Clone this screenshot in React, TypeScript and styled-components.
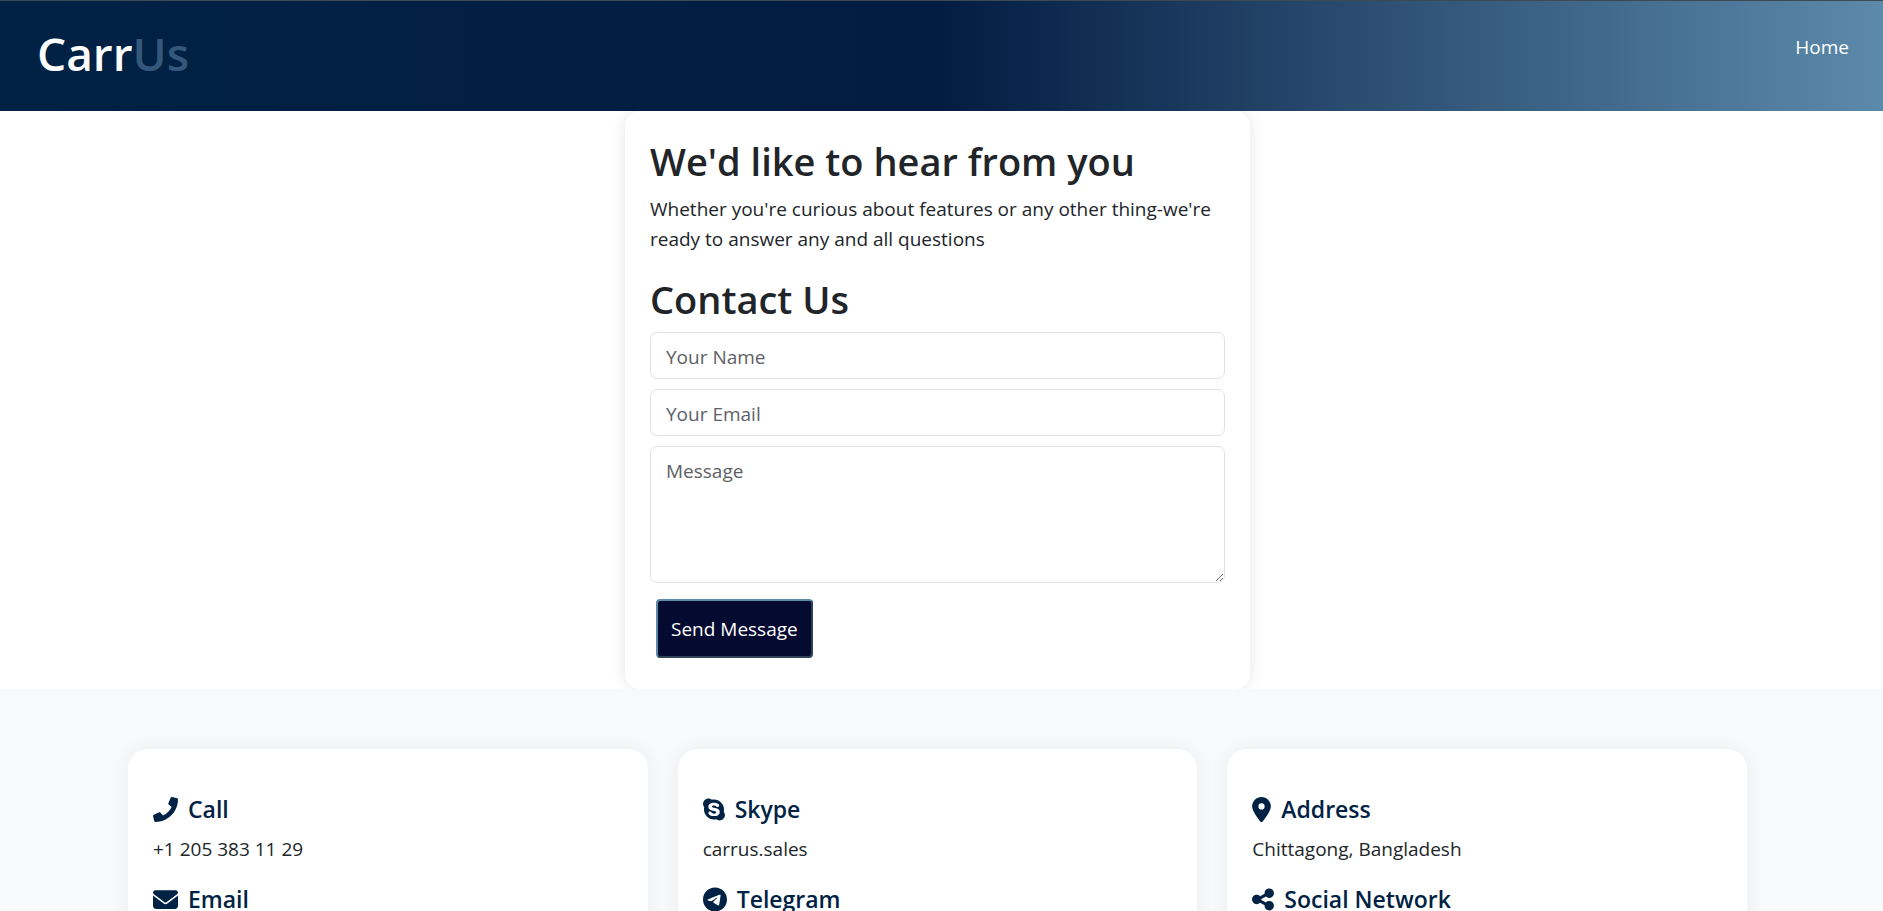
import React from "react";
import styled, { createGlobalStyle } from "styled-components";
import { FaEnvelope, FaSkype, FaTelegram, FaLocationDot, FaShareNodes } from "react-icons/fa6";
import { FaPhone } from "react-icons/fa";

const GlobalStyle = createGlobalStyle`
  *, *::before, *::after { box-sizing: border-box; }
  body {
    margin: 0;
    background: #fff;
    color: #212529;
    font-family: "Segoe UI", "Open Sans", "Noto Sans", sans-serif;
    font-size: 19px;
    line-height: 30px;
  }
  h1, h2, h3, p { margin: 0; }
`;

const Header = styled.header`
  display: flex;
  justify-content: space-between;
  align-items: flex-start;
  padding: 16px 34px 22px 37px;
  border-top: 1px solid #3d4a4f;
  background: linear-gradient(to right, #002244 0%, #031c42 50%, #5c8aaa 100%);
`;

const Brand = styled.a`
  color: #fff;
  font-size: 46px;
  line-height: 72px;
  font-weight: 600;
  text-decoration: none;
`;

const BrandAccent = styled.span`
  color: #34587c;
`;

const NavLink = styled.a`
  display: block;
  padding: 15px 0;
  color: #fff;
  text-decoration: none;
`;

const ContactArea = styled.div`
  overflow: hidden;
  padding-right: 8px;
`;

const ContactCard = styled.section`
  width: 625px;
  max-width: 100%;
  margin: 0 auto;
  padding: 25px;
  border-radius: 15px;
  background: #fff;
  box-shadow: 0 0 15px rgba(0, 0, 0, 0.1);
`;

const Title = styled.h1`
  font-size: 38px;
  line-height: 50px;
  font-weight: 600;
  margin-bottom: 8px;
`;

const Intro = styled.p`
  margin-bottom: 20px;
`;

const Form = styled.form`
  display: flex;
  flex-direction: column;
  align-items: stretch;
  gap: 10px;
`;

const Field = styled.input`
  width: 100%;
  height: 47px;
  padding: 9px 15px 7px;
  border: 1px solid #dee2e6;
  border-radius: 7px;
  background: #fff;
  color: #212529;
  font: inherit;
  &::placeholder { color: #5d6166; opacity: 1; }
`;

const MessageField = styled(Field)`
  display: block;
  height: 137px;
  resize: vertical;
`;

const SendButton = styled.button`
  align-self: flex-start;
  margin: 6px;
  padding: 13px 13px 12px;
  border: 2px outset #5c8aaa;
  border-radius: 4px;
  background: #050a30;
  color: #fff;
  font: inherit;
`;

const InfoSection = styled.section`
  padding: 60px 136px 60px 128px;
  background: #f7f9fb;
`;

const InfoGrid = styled.div`
  display: grid;
  grid-template-columns: repeat(3, 1fr);
  gap: 30px;
`;

const InfoCard = styled.article`
  padding: 45px 25px;
  border-radius: 20px;
  background: #fff;
  box-shadow: 0 0 20px rgba(0, 0, 0, 0.05);
`;

const InfoHeading = styled.h2<{ $iconWidth: number }>`
  display: flex;
  align-items: center;
  gap: 10px;
  margin: 0 0 10px;
  color: #002244;
  font-size: 23px;
  line-height: 30px;
  font-weight: 600;
  svg { flex: none; width: ${(p) => p.$iconWidth}px; height: 25px; }
`;

const InfoText = styled.p`
  margin-bottom: 20px;
`;

const cards = [
  [
    { icon: FaPhone, width: 25, title: "Call", text: "+1 205 383 11 29" },
    { icon: FaEnvelope, width: 25, title: "Email", text: "" },
  ],
  [
    { icon: FaSkype, width: 22, title: "Skype", text: "carrus.sales" },
    { icon: FaTelegram, width: 24, title: "Telegram", text: "" },
  ],
  [
    { icon: FaLocationDot, width: 19, title: "Address", text: "Chittagong, Bangladesh" },
    { icon: FaShareNodes, width: 22, title: "Social Network", text: "" },
  ],
];

export default function App() {
  return (
    <>
      <GlobalStyle />
      <Header>
        <Brand href="#">Carr<BrandAccent>Us</BrandAccent></Brand>
        <nav><NavLink href="#">Home</NavLink></nav>
      </Header>
      <main>
        <ContactArea>
          <ContactCard>
            <Title>We'd like to hear from you</Title>
            <Intro>
              Whether you're curious about features or any other thing-we're ready to answer any and all questions
            </Intro>
            <Title as="h2">Contact Us</Title>
            <Form>
              <Field type="text" placeholder="Your Name" aria-label="Your Name" />
              <Field type="email" placeholder="Your Email" aria-label="Your Email" />
              <MessageField as="textarea" placeholder="Message" aria-label="Message" />
              <SendButton type="button">Send Message</SendButton>
            </Form>
          </ContactCard>
        </ContactArea>
        <InfoSection>
          <InfoGrid>
            {cards.map((items) => (
              <InfoCard key={items[0].title}>
                {items.map(({ icon: Icon, width, title, text }) => (
                  <React.Fragment key={title}>
                    <InfoHeading $iconWidth={width}><Icon aria-hidden="true" />{title}</InfoHeading>
                    {text && <InfoText>{text}</InfoText>}
                  </React.Fragment>
                ))}
              </InfoCard>
            ))}
          </InfoGrid>
        </InfoSection>
      </main>
    </>
  );
}
